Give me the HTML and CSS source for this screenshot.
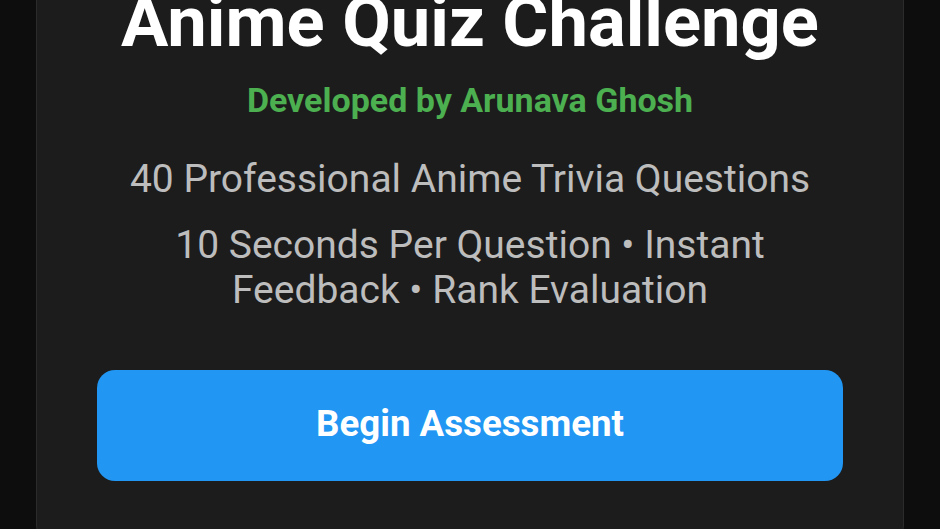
FILE: index.html
```html
<!DOCTYPE html>
<html lang="en">
<head>
<meta charset="utf-8">
<title>Anime Quiz Challenge</title>
<link rel="stylesheet" href="styles.css">
</head>
<body>
<main class="card">
  <h1 class="title">Anime Quiz Challenge</h1>
  <p class="dev">Developed by Arunava Ghosh</p>
  <p class="info">40 Professional Anime Trivia Questions</p>
  <p class="info info-wrap">10 Seconds Per Question • Instant Feedback • Rank Evaluation</p>
  <button class="start">Begin Assessment</button>
</main>
</body>
</html>
```
FILE: styles.css
```css
html, body {
  margin: 0;
  height: 100%;
  overflow: hidden;
  background: #0d0d0d;
  font-family: Roboto, "Liberation Sans", sans-serif;
}
.card {
  box-sizing: border-box;
  width: 868px;
  margin: -40px auto 0;
  padding: 19px 60px 60px;
  background: #1c1c1c;
  border: 1px solid #2b2b2b;
  border-radius: 16px;
  text-align: center;
}
.title {
  margin: 0;
  font-size: 70.5px;
  font-weight: 700;
  line-height: 84px;
  color: #ffffff;
}
.dev {
  margin: 15.5px 0 0;
  font-size: 34px;
  font-weight: 700;
  line-height: 40px;
  color: #4caf50;
}
.info {
  margin: 37px 0 0;
  font-size: 39px;
  line-height: 45px;
  color: #bdbdbd;
}
.info-wrap {
  margin-top: 21px;
  padding: 0 40px;
}
.start {
  display: block;
  width: 100%;
  height: 111px;
  margin-top: 57px;
  padding: 0 0 3px;
  border: none;
  border-radius: 18px;
  background: #2196f3;
  color: #ffffff;
  font-family: Roboto, "Liberation Sans", sans-serif;
  font-size: 36.7px;
  font-weight: 700;
}
```
